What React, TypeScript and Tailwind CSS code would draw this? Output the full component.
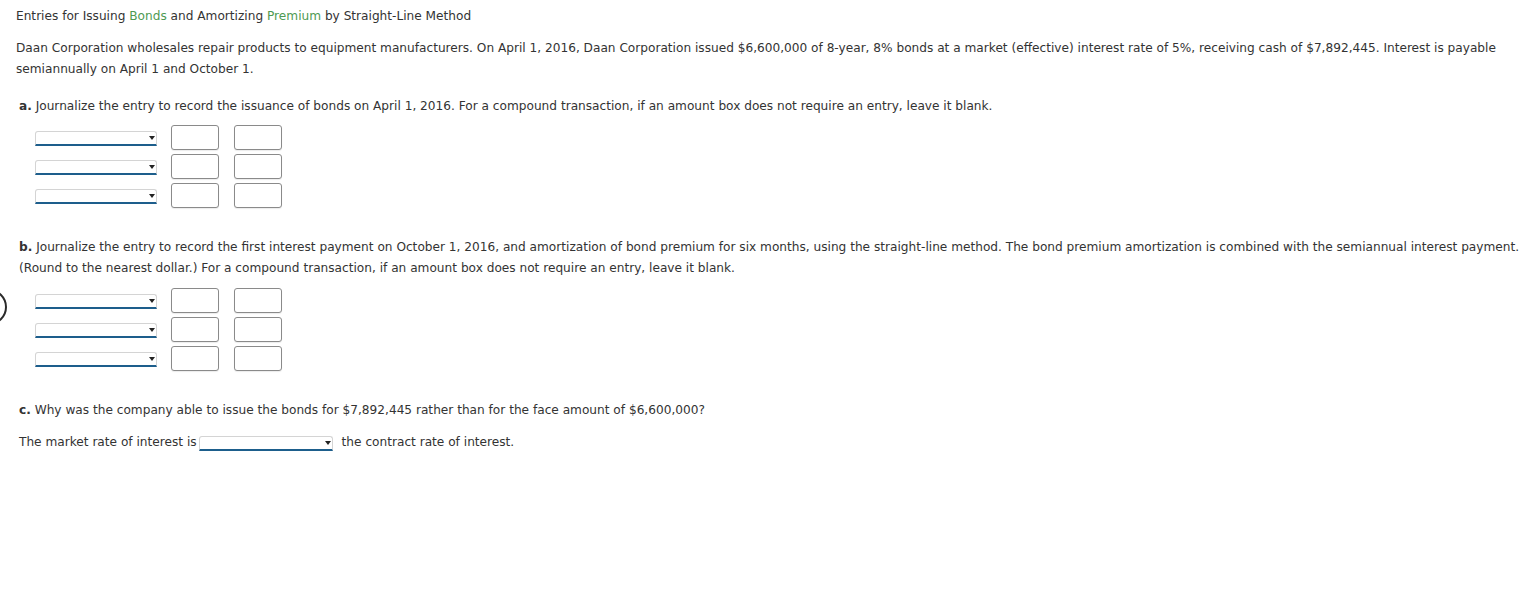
import React from "react";

const font = { fontFamily: '"DejaVu Sans", Verdana, sans-serif' };

function Dropdown({ width = "w-[122px]" }: { width?: string }) {
  return (
    <div
      className={`relative h-[15px] ${width} rounded-t-[3px] border-t border-l border-r border-[#d4d4d4] border-b-2 border-b-[#1d5e8c] bg-white`}
    >
      <span className="absolute right-[1px] top-[4px] h-0 w-0 border-l-[3.5px] border-r-[3.5px] border-t-[4px] border-l-transparent border-r-transparent border-t-[#222]" />
    </div>
  );
}

function AmountBox() {
  return (
    <div className="h-[25px] w-[48px] rounded-[3px] border-[1.5px] border-[#8a8a8a] bg-white shadow-[0_1px_1px_rgba(0,0,0,0.08)]" />
  );
}

function JournalRows() {
  return (
    <div className="ml-[19px] flex flex-col gap-[4px]">
      {[0, 1, 2].map((i) => (
        <div key={i} className="flex items-center">
          <div className="mt-[1px]">
            <Dropdown />
          </div>
          <div className="ml-[14px] flex gap-[15px]">
            <AmountBox />
            <AmountBox />
          </div>
        </div>
      ))}
    </div>
  );
}

export default function App() {
  return (
    <div
      className="relative min-h-[596px] bg-white pl-4 pr-[4px] pt-[6px] text-[12.15px] leading-[21px] text-[#333]"
      style={font}
    >
      <div className="pointer-events-none absolute left-[-29px] top-[289px] h-[36px] w-[36px] rounded-full border-[2.5px] border-[#2b2b2b]" />

      <p>
        Entries for Issuing <span className="text-[#4e9a52]">Bonds</span> and
        Amortizing <span className="text-[#4e9a52]">Premium</span> by
        Straight-Line Method
      </p>

      <p className="mt-[11px] pr-[20px]">
        Daan Corporation wholesales repair products to equipment manufacturers.
        On April 1, 2016, Daan Corporation issued $6,600,000 of 8-year, 8% bonds
        at a market (effective) interest rate of 5%, receiving cash of
        $7,892,445. Interest is payable semiannually on April 1 and October 1.
      </p>

      <p className="ml-[3px] mt-[16px]">
        <b>a.</b> Journalize the entry to record the issuance of bonds on April
        1, 2016. For a compound transaction, if an amount box does not require an
        entry, leave it blank.
      </p>

      <div className="mt-[8px]">
        <JournalRows />
      </div>

      <p className="ml-[3px] mt-[29px]">
        <b>b.</b> Journalize the entry to record the first interest payment on
        October 1, 2016, and amortization of bond premium for six months, using
        the straight-line method. The bond premium amortization is combined with
        the semiannual interest payment. (Round to the nearest dollar.) For a
        compound transaction, if an amount box does not require an entry, leave
        it blank.
      </p>

      <div className="mt-[9px]">
        <JournalRows />
      </div>

      <p className="ml-[3px] mt-[29px]">
        <b>c.</b> Why was the company able to issue the bonds for $7,892,445
        rather than for the face amount of $6,600,000?
      </p>

      <div className="ml-[3px] mt-[11px] flex items-center">
        <span>The market rate of interest is</span>
        <div className="ml-[2px] mt-[1px]">
          <Dropdown width="w-[134px]" />
        </div>
        <span className="ml-[9px]">the contract rate of interest.</span>
      </div>
    </div>
  );
}
